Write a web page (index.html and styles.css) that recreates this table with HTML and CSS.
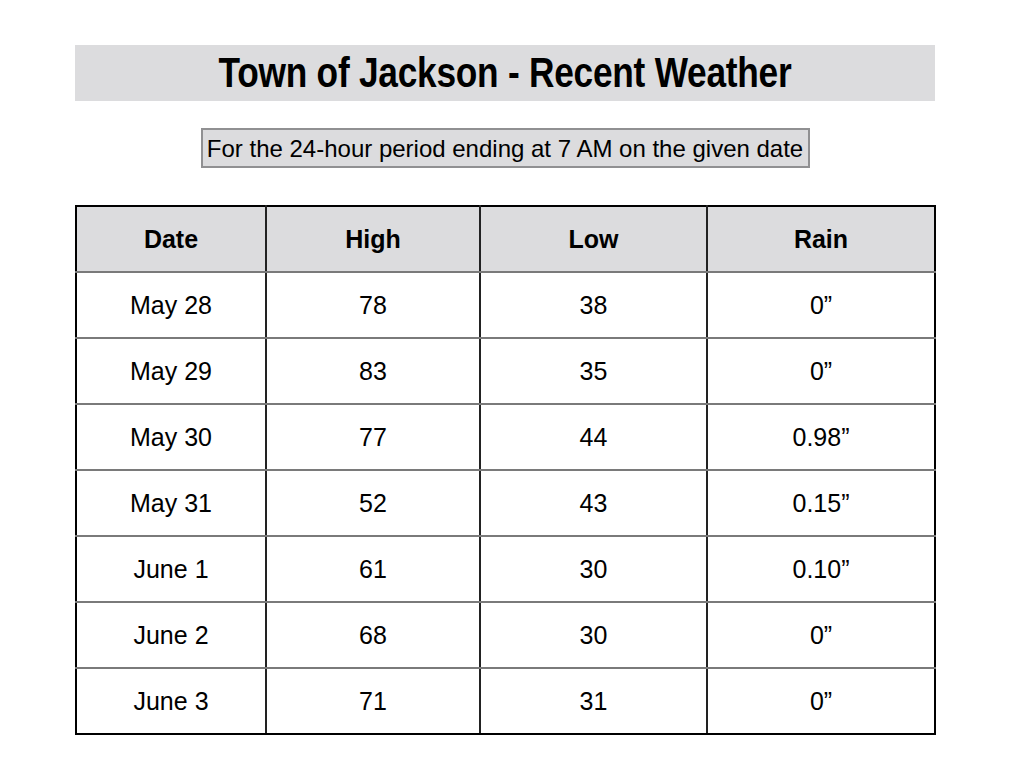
FILE: index.html
```html
<!DOCTYPE html>
<html>
<head>
<meta charset="utf-8">
<link rel="stylesheet" href="styles.css">
</head>
<body>
<div class="page">
  <h1 class="title"><span class="title-text">Town of Jackson - Recent Weather</span></h1>
  <div class="subtitle-wrap">
    <div class="subtitle">For the 24-hour period ending at 7 AM on the given date</div>
  </div>
  <table class="weather">
    <colgroup>
      <col class="c1"><col class="c2"><col class="c3"><col class="c4">
    </colgroup>
    <thead>
      <tr><th>Date</th><th>High</th><th>Low</th><th>Rain</th></tr>
    </thead>
    <tbody>
      <tr><td>May 28</td><td>78</td><td>38</td><td>0”</td></tr>
      <tr><td>May 29</td><td>83</td><td>35</td><td>0”</td></tr>
      <tr><td>May 30</td><td>77</td><td>44</td><td>0.98”</td></tr>
      <tr><td>May 31</td><td>52</td><td>43</td><td>0.15”</td></tr>
      <tr><td>June 1</td><td>61</td><td>30</td><td>0.10”</td></tr>
      <tr><td>June 2</td><td>68</td><td>30</td><td>0”</td></tr>
      <tr><td>June 3</td><td>71</td><td>31</td><td>0”</td></tr>
    </tbody>
  </table>
</div>
</body>
</html>
```

FILE: styles.css
```css
html, body {
  margin: 0;
  padding: 0;
  background: #ffffff;
}
.page {
  width: 860px;
  margin-left: 75px;
  padding-top: 45px;
  font-family: "Liberation Sans", Arial, sans-serif;
  color: #000;
}
.title {
  margin: 0;
  height: 56px;
  background: #dcdcde;
  display: flex;
  align-items: center;
  justify-content: center;
  font-family: "Liberation Sans", sans-serif;
  font-weight: bold;
  font-size: 42px;
}
.title-text {
  display: inline-block;
  transform: scaleX(0.84);
  white-space: nowrap;
  letter-spacing: -0.3px;
}
.subtitle-wrap {
  display: flex;
  justify-content: center;
  margin-top: 27px;
}
.subtitle {
  width: 605px;
  height: 36px;
  box-sizing: content-box;
  border: 2px solid #909092;
  background: #dcdcde;
  font-size: 24px;
  line-height: 37px;
  text-align: center;
  white-space: nowrap;
}
.weather {
  margin-top: 37px;
  width: 859px;
  border-collapse: collapse;
  table-layout: fixed;
  border: 2px solid #000;
}
.c1 { width: 190px; }
.c2 { width: 214px; }
.c3 { width: 227px; }
.c4 { width: 228px; }
.weather th, .weather td {
  height: 64px;
  padding: 0;
  text-align: center;
  vertical-align: middle;
  font-size: 25px;
  border-left: 2px solid #222;
  border-right: 2px solid #222;
  border-top: 2px solid #7a7a7a;
  border-bottom: 2px solid #7a7a7a;
}
.weather th {
  background: #dcdcde;
  font-weight: bold;
  border-top: 2px solid #000;
}
.weather tbody tr:last-child td {
  border-bottom: 2px solid #000;
}
.weather th:first-child, .weather td:first-child {
  border-left: 2px solid #000;
}
.weather th:last-child, .weather td:last-child {
  border-right: 2px solid #000;
}
```
